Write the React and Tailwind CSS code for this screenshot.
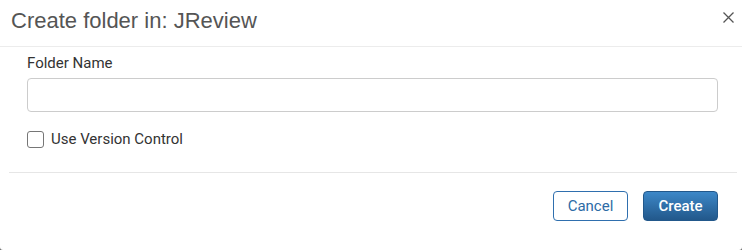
import React from "react";

export default function App() {
  return (
    <div className="w-[742px] h-[250px] bg-[#6b6b6b]">
      <div className="h-full bg-white rounded-b-[3px] flex flex-col" style={{ fontFamily: "Roboto, 'Liberation Sans', sans-serif" }}>
        <div className="relative pl-[11px] pt-[9px] pb-[13px] border-b border-[#ececec]">
          <h1 className="text-[22px] leading-[24px] text-[#555555]" style={{ fontFamily: "'Liberation Sans', Arial, sans-serif" }}>
            Create folder in: JReview
          </h1>
          <button className="absolute right-[8px] top-[12px] w-[11px] h-[11px] flex items-center justify-center" aria-label="Close">
            <svg width="11" height="11" viewBox="0 0 11 11">
              <path d="M0.5 0.5 L10.5 10.5 M10.5 0.5 L0.5 10.5" stroke="#555" strokeWidth="1.3" fill="none" />
            </svg>
          </button>
        </div>
        <div className="ml-[9px] mr-[5px] flex flex-col flex-1">
          <div className="pl-[18px] pr-[19px] pt-[6px] pb-[23px] border-b border-[#e6e6e6]">
            <label className="block text-[15px] leading-[20px] text-[#333333]">Folder Name</label>
            <input type="text" className="mt-[5px] block w-full h-[34px] border border-[#cccccc] rounded-[4px] px-2 text-[15px] outline-none" />
            <label className="mt-[17px] flex items-center h-[20px] gap-[7px] text-[15px] text-[#333333]">
              <span className="w-[17px] h-[17px] border border-[#767676] rounded-[3px] bg-white inline-block" />
              Use Version Control
            </label>
          </div>
          <div className="flex justify-end gap-[15px] pr-[19px] pt-[18px]">
            <button className="w-[75px] h-[30px] border border-[#2f6fae] rounded-[4px] text-[#2d6ba6] text-[15px] bg-white">
              Cancel
            </button>
            <button className="w-[75px] h-[30px] rounded-[4px] text-white text-[15px] font-medium bg-gradient-to-b from-[#3d88c8] to-[#22588b] border border-[#22588b]">
              Create
            </button>
          </div>
        </div>
      </div>
    </div>
  );
}
